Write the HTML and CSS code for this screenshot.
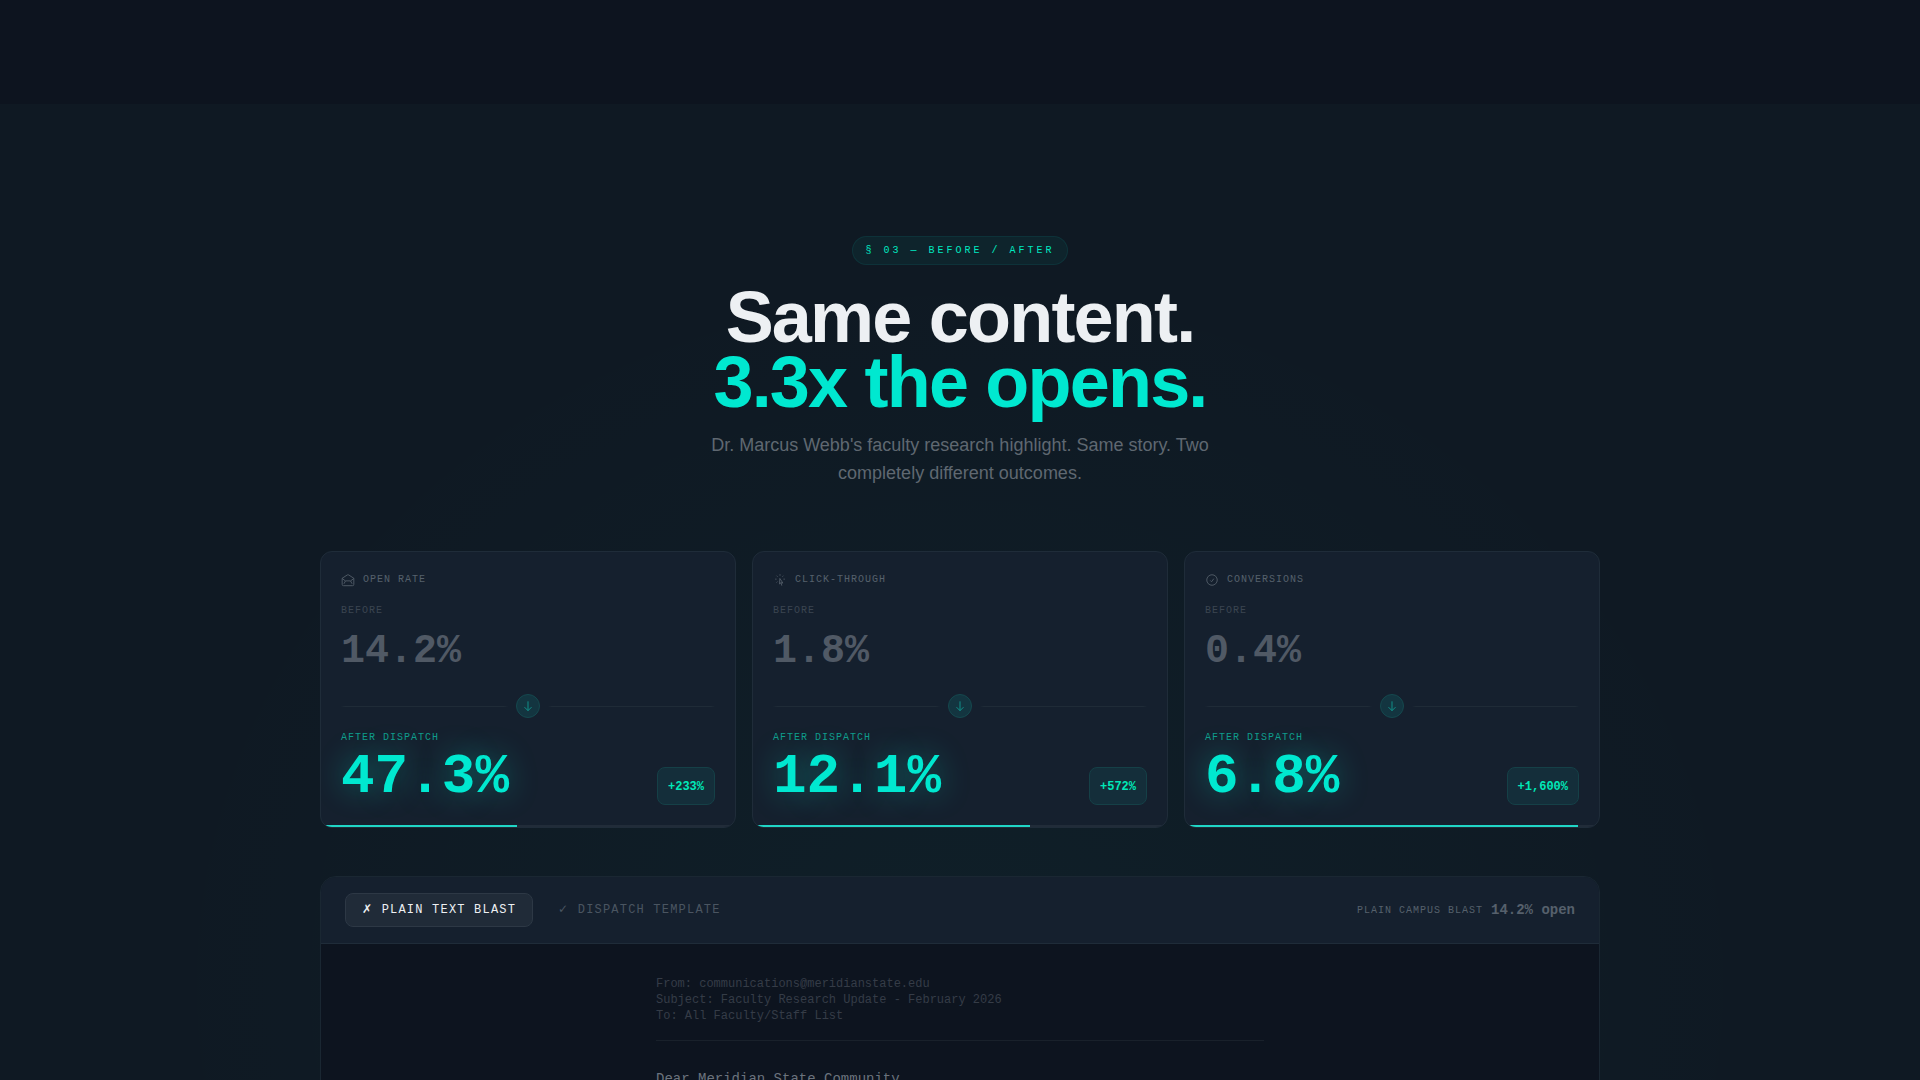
FILE: index.html
```html
<!DOCTYPE html>
<html lang="en">
<head>
  <meta charset="UTF-8" />
  <meta name="viewport" content="width=device-width, initial-scale=1.0"/>
  <title>Dispatch - Before / After</title>
  <link rel="stylesheet" href="styles.css">
</head>
<body>

  <section class="compare">
    <div class="container">

      <header class="intro">
        <span class="eyebrow">§ 03 — BEFORE / AFTER</span>
        <h2>Same content.<br><span class="accent">3.3x the opens.</span></h2>
        <p>Dr. Marcus Webb's faculty research highlight. Same story. Two completely different outcomes.</p>
      </header>

      <div class="stats">
        <article class="stat-card">
          <h3 class="stat-title">
            <svg class="icon" viewBox="0 0 24 24" aria-hidden="true"><path d="M22 9v10.5a2.25 2.25 0 0 1-2.25 2.25H4.25A2.25 2.25 0 0 1 2 19.500V9l8.9-5.700a2.25 2.25 0 0 1 2.2 0L22 9ZM2 9.500l5.500 4M22 9.500l-5.500 4M5 18.500l2.750-5h8.500L19 18.500"/></svg>
            <span>OPEN RATE</span>
          </h3>
          <div class="label">BEFORE</div>
          <div class="before-value">14.2%</div>
          <div class="divider">
            <span class="line"></span>
            <span class="arrow"><svg viewBox="0 0 24 24" aria-hidden="true"><path d="M12 4v16M6 14l6 6 6-6"/></svg></span>
            <span class="line"></span>
          </div>
          <div class="label label-after">AFTER DISPATCH</div>
          <div class="after">
            <span class="after-value">47.3%</span>
            <span class="change">+233%</span>
          </div>
          <div class="bar"><div class="fill" style="width: 47.3%"></div></div>
        </article>

        <article class="stat-card">
          <h3 class="stat-title">
            <svg class="icon" viewBox="0 0 24 24" aria-hidden="true"><path d="M15.04 21.67 13.68 16.6m0 0-2.51 2.22.57-9.47 5.23 7.92-3.29-.67ZM12 2.25V4.5m5.83.17-1.59 1.59M20.25 10.5H18M7.76 14.74l-1.6 1.6M6 10.5H3.75m4.01-4.24-1.6-1.6"/></svg>
            <span>CLICK-THROUGH</span>
          </h3>
          <div class="label">BEFORE</div>
          <div class="before-value">1.8%</div>
          <div class="divider">
            <span class="line"></span>
            <span class="arrow"><svg viewBox="0 0 24 24" aria-hidden="true"><path d="M12 4v16M6 14l6 6 6-6"/></svg></span>
            <span class="line"></span>
          </div>
          <div class="label label-after">AFTER DISPATCH</div>
          <div class="after">
            <span class="after-value">12.1%</span>
            <span class="change">+572%</span>
          </div>
          <div class="bar"><div class="fill" style="width: 67%"></div></div>
        </article>

        <article class="stat-card">
          <h3 class="stat-title">
            <svg class="icon" viewBox="0 0 24 24" aria-hidden="true"><path d="M9 12.75 11.25 15 15 9.75M21 12a9 9 0 1 1-18 0 9 9 0 0 1 18 0Z"/></svg>
            <span>CONVERSIONS</span>
          </h3>
          <div class="label">BEFORE</div>
          <div class="before-value">0.4%</div>
          <div class="divider">
            <span class="line"></span>
            <span class="arrow"><svg viewBox="0 0 24 24" aria-hidden="true"><path d="M12 4v16M6 14l6 6 6-6"/></svg></span>
            <span class="line"></span>
          </div>
          <div class="label label-after">AFTER DISPATCH</div>
          <div class="after">
            <span class="after-value">6.8%</span>
            <span class="change">+1,600%</span>
          </div>
          <div class="bar"><div class="fill" style="width: 95%"></div></div>
        </article>
      </div>

      <div class="preview">
        <div class="preview-header">
          <div class="tabs">
            <button type="button" class="tab active"><b>✗</b> PLAIN TEXT BLAST</button>
            <button type="button" class="tab"><b>✓</b> DISPATCH TEMPLATE</button>
          </div>
          <div class="preview-stat">
            <span class="preview-name">PLAIN CAMPUS BLAST</span>
            <strong>14.2% open</strong>
          </div>
        </div>
        <div class="email">
          <div class="email-meta">
            <p>From: communications@meridianstate.edu</p>
            <p>Subject: Faculty Research Update - February 2026</p>
            <p>To: All Faculty/Staff List</p>
          </div>
          <p class="email-body">Dear Meridian State Community,</p>
        </div>
      </div>

    </div>
  </section>

</body>
</html>
```

FILE: styles.css
```css
* {
  box-sizing: border-box;
  margin: 0;
  padding: 0;
}

body {
  font-family: 'Liberation Sans', Arial, sans-serif;
  background-color: #0d141f;
  color: #edf0f3;
  padding-top: 104px;
}

.compare {
  background-color: #0f1923;
  background-image: radial-gradient(ellipse 820px 740px at 50% 880px, rgba(0, 229, 204, 0.03), transparent);
  padding: 132px 24px;
}

.container {
  max-width: 1280px;
  margin: 0 auto;
}

/* Intro */
.intro {
  display: flex;
  flex-direction: column;
  align-items: center;
  text-align: center;
  margin-bottom: 64px;
}

.eyebrow,
.stat-card,
.tab,
.preview {
  font-family: 'Liberation Mono', 'DejaVu Sans', monospace;
}

.eyebrow {
  font-size: 10px;
  line-height: 15px;
  letter-spacing: 0.3em;
  color: #00e8c0;
  background-color: rgba(0, 229, 204, 0.06);
  border: 1px solid rgba(0, 229, 204, 0.08);
  border-radius: 999px;
  padding: 6px 12px;
  margin-bottom: 20px;
}

.intro h2 {
  font-size: 72px;
  line-height: 65px;
  letter-spacing: -0.025em;
  margin-bottom: 16px;
}

.accent {
  color: #00e8d0;
}

.intro p {
  max-width: 512px;
  font-size: 18px;
  line-height: 28px;
  color: #5f6871;
}

/* Stat cards */
.stats {
  display: grid;
  grid-template-columns: repeat(3, 1fr);
  gap: 16px;
  margin-bottom: 48px;
}

.stat-card {
  background-color: #15202e;
  border: 1px solid #1f2c39;
  border-radius: 12px;
  padding: 20px 20px 0;
  overflow: hidden;
}

.stat-title {
  display: flex;
  gap: 8px;
  font-size: 10px;
  font-weight: normal;
  line-height: 15px;
  letter-spacing: 0.1em;
  color: #56606c;
  margin-bottom: 16px;
}

.icon {
  width: 14px;
  height: 14px;
  margin-top: 1px;
  fill: none;
  stroke: currentColor;
  stroke-width: 1.5;
}

.label {
  font-size: 10px;
  line-height: 15px;
  letter-spacing: 0.1em;
  color: #3b4551;
}

.label-after {
  color: #109c8c;
  margin-bottom: 4px;
}

.before-value {
  font-size: 40px;
  font-weight: bold;
  line-height: 60px;
  color: #505965;
  margin: 4px 0 12px;
}

.divider {
  display: flex;
  align-items: center;
  gap: 8px;
  margin-bottom: 12px;
}

.line {
  flex: 1;
  height: 1px;
  background: linear-gradient(to right, transparent, #1f2b37 4px calc(100% - 4px), transparent);
}

.arrow {
  display: flex;
  align-items: center;
  justify-content: center;
  width: 24px;
  height: 24px;
  background-color: #133540;
  border: 1px solid #15484e;
  border-radius: 50%;
}

.arrow svg {
  width: 14px;
  height: 14px;
  fill: none;
  stroke: #109c92;
  stroke-width: 1.5;
}

.after {
  display: flex;
  justify-content: space-between;
  align-items: flex-end;
  margin-bottom: 20px;
}

.after-value {
  font-size: 56px;
  font-weight: bold;
  line-height: 56px;
  color: #00e8d0;
  text-shadow: 0 0 30px rgba(0, 229, 204, 0.4);
}

.change {
  font-size: 12px;
  font-weight: bold;
  line-height: 18px;
  color: #00e8b8;
  background-color: #142e3a;
  border: 1px solid #154047;
  border-radius: 8px;
  padding: 10px 10px 8px;
}

.bar {
  height: 2px;
  margin: 0 -20px;
  background-color: #212c39;
}

.fill {
  height: 100%;
  background-color: #20d6c6;
}

/* Email preview */
.preview {
  border: 1px solid #1a2732;
  border-radius: 16px;
  overflow: hidden;
}

.preview-header {
  display: flex;
  justify-content: space-between;
  align-items: center;
  background-color: #15202e;
  border-bottom: 1px solid #1f2c39;
  padding: 16px 24px;
}

.tabs,
.preview-stat {
  display: flex;
  align-items: center;
  gap: 8px;
}

.tab {
  font-size: 12px;
  line-height: 16px;
  letter-spacing: 0.1em;
  color: #4a5561;
  background: none;
  border: 1px solid transparent;
  border-radius: 8px;
  padding: 8px 16px;
  cursor: pointer;
}

.tab.active {
  color: #edf0f3;
  background-color: #202b38;
  border-color: #2d3845;
}

.preview-stat {
  color: #56606c;
}

.preview-name {
  font-size: 10px;
  letter-spacing: 0.1em;
}

.preview-stat strong {
  font-size: 14px;
}

.email {
  background-color: #0d141f;
  padding: 32px;
}

.email-meta,
.email-body {
  max-width: 608px;
  margin: 0 auto;
}

.email-meta {
  font-size: 12px;
  line-height: 16px;
  color: #353c47;
  border-bottom: 1px solid #19212b;
  padding-bottom: 16px;
  margin-bottom: 24px;
}

.email-body {
  font-size: 14px;
  line-height: 28px;
  color: #6b737d;
}

@media (max-width: 900px) {
  .stats {
    grid-template-columns: 1fr;
  }

  .preview-header {
    flex-direction: column;
    gap: 16px;
  }
}
```
